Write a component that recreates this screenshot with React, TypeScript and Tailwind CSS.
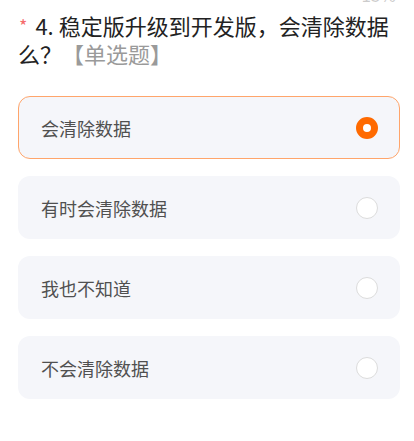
import { useState } from "react";

const options = ["会清除数据", "有时会清除数据", "我也不知道", "不会清除数据"];

function Radio({ checked }: { checked: boolean }) {
  if (checked) {
    return <span className="box-border block h-[22px] w-[22px] rounded-full border-[7px] border-[#ff6a00] bg-white" />;
  }
  return <span className="box-border block h-[22px] w-[22px] rounded-full border border-[#dcdcdc] bg-white" />;
}

export default function App() {
  const [selected, setSelected] = useState(0);
  return (
    <div
      className="h-[441px] w-[414px] overflow-hidden bg-white pr-[14px] pl-[18px]"
      style={{ fontFamily: '"Noto Sans CJK SC", "Noto Sans", sans-serif' }}
    >
      <div className="-mt-[14px] h-[18px] pr-[4px] text-right text-[17px] leading-[18px] text-[#cccccc]">15%</div>
      <h2 className="mt-[8px] pr-[4px] text-[22px] leading-[26px] font-normal text-[#222222]">
        <span className="relative -top-[2px] mr-[8px] ml-[1px] text-[18px] text-[#f56c6c]">*</span>
        4. 稳定版升级到开发版，会清除数据么？
        <span className="text-[#9a9a9a]">【单选题】</span>
      </h2>
      <div className="mt-[30px] flex flex-col gap-[17px]">
        {options.map((opt, i) => {
          const checked = selected === i;
          return (
            <button
              key={opt}
              type="button"
              onClick={() => setSelected(i)}
              className={`box-border flex h-[63px] w-full items-center justify-between rounded-[12px] bg-[#f5f6fa] pr-[21px] pl-[22px] text-left ${
                checked ? "border-[1.5px] border-[#ffa56b]" : "border-[1.5px] border-transparent"
              }`}
            >
              <span className="text-[18px] leading-[24px] text-[#505050]">{opt}</span>
              <Radio checked={checked} />
            </button>
          );
        })}
      </div>
    </div>
  );
}
